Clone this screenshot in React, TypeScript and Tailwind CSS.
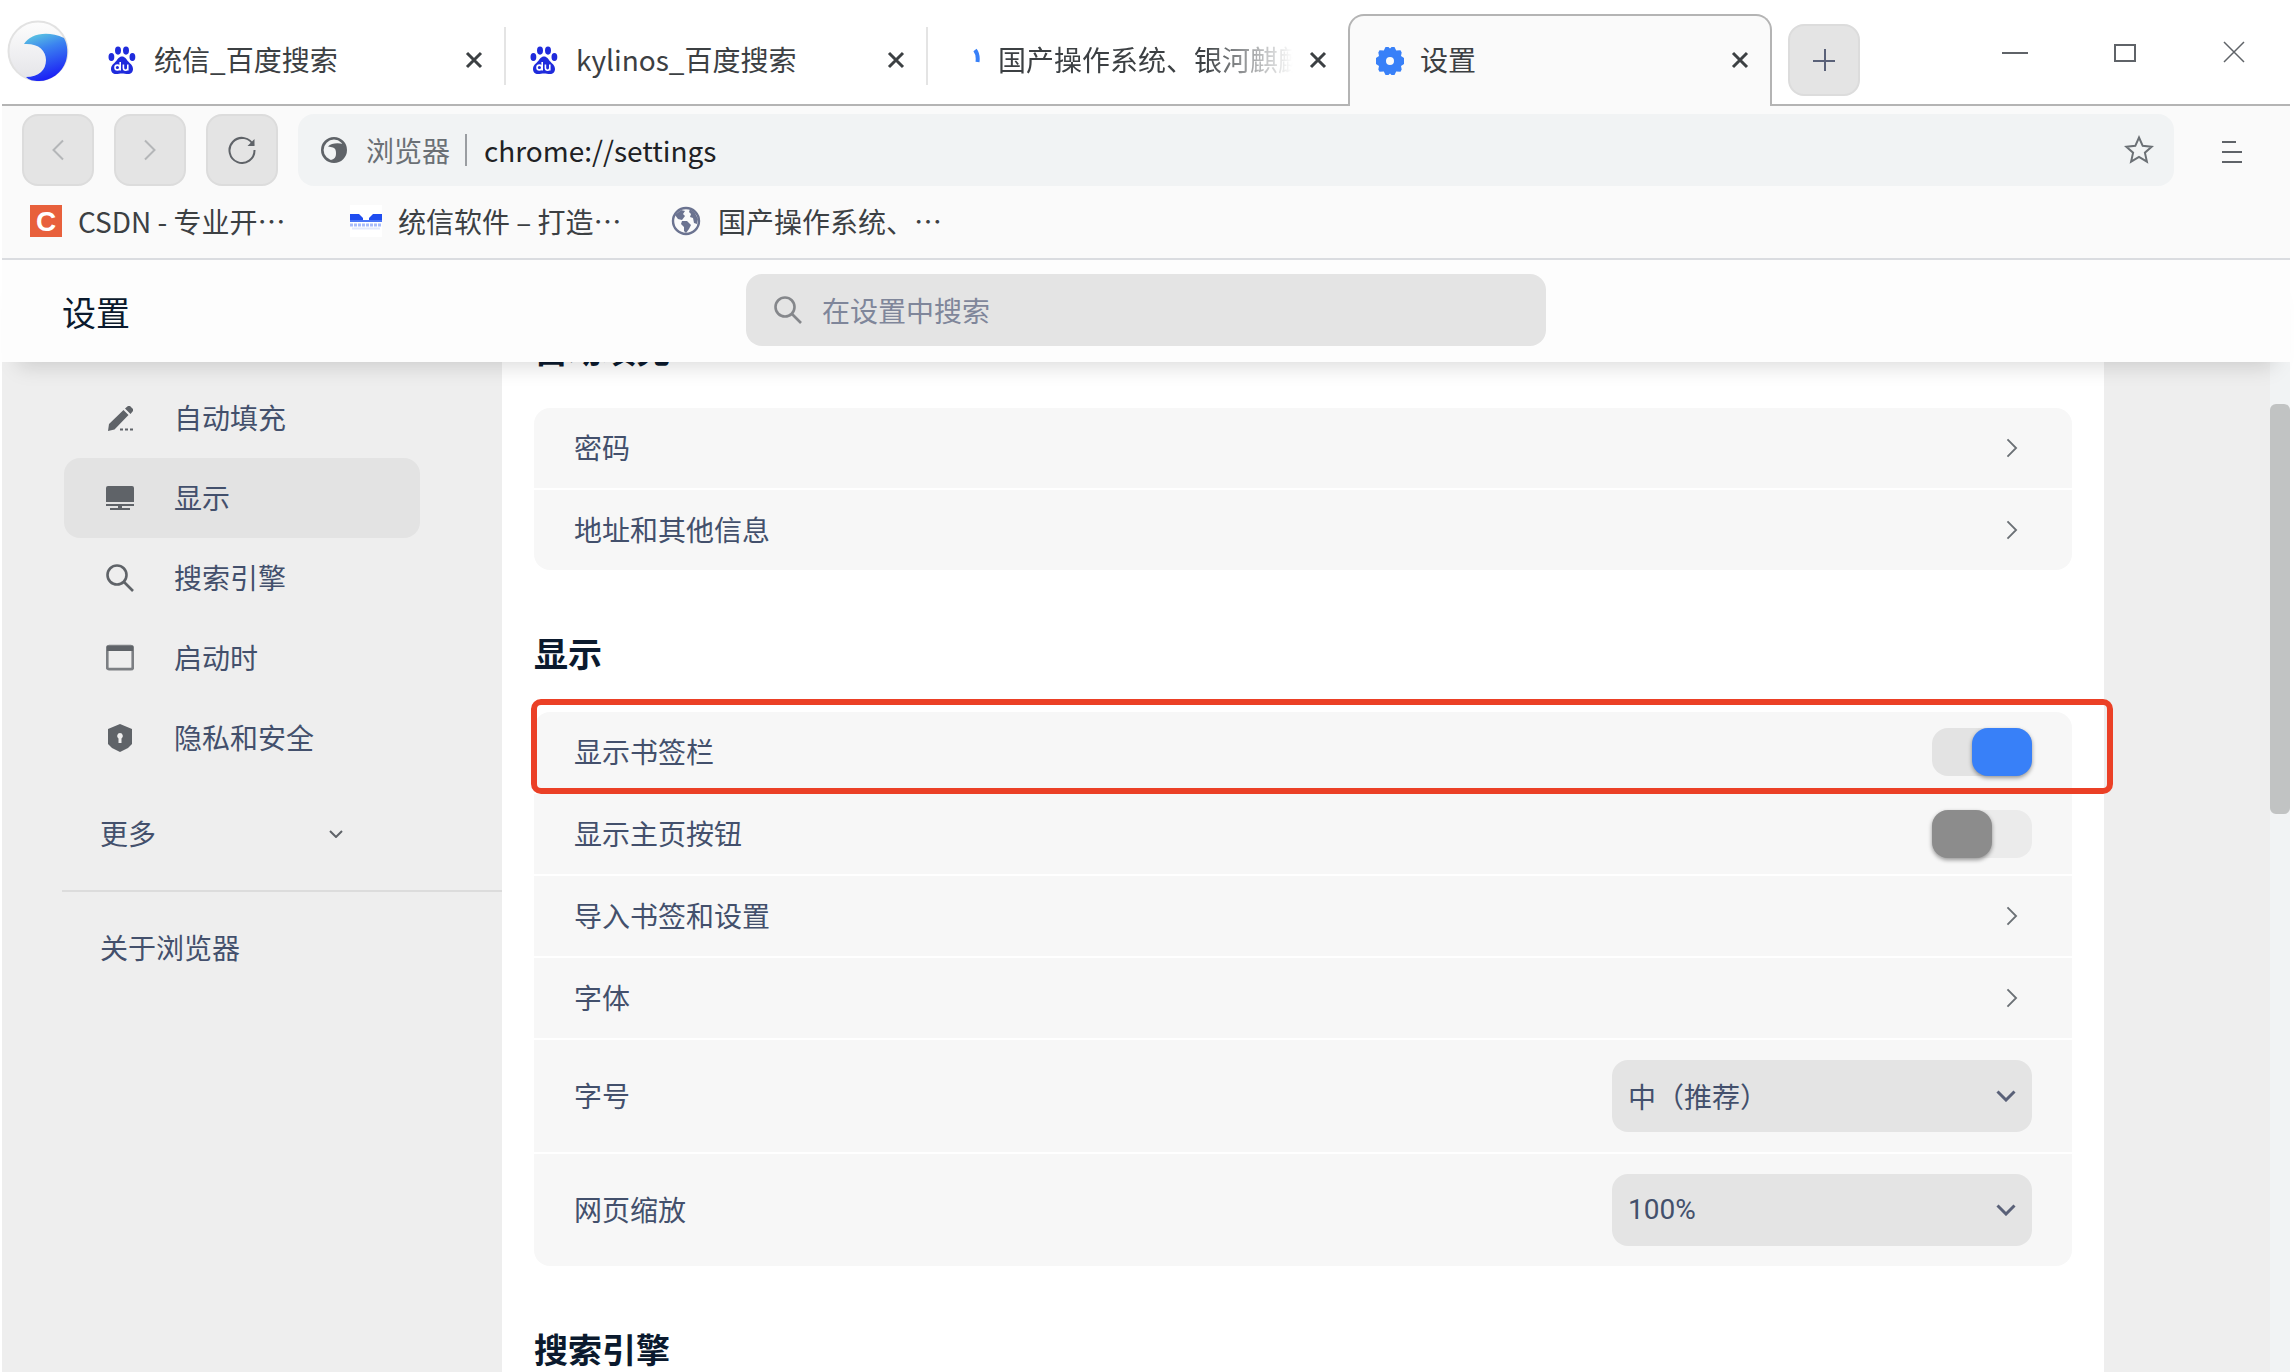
import React, { useState } from 'react';

interface Tab {
  title: string;
  icon: 'baidu' | 'loading' | 'gear';
}

const TABS: Tab[] = [
  { title: '统信_百度搜索', icon: 'baidu' },
  { title: 'kylinos_百度搜索', icon: 'baidu' },
  { title: '国产操作系统、银河麒麟', icon: 'loading' },
];

function BaiduIcon() {
  return (
    <svg viewBox="0 0 28 28" className="size-7 shrink-0" aria-hidden="true">
      <g fill="#1f2bdc">
        <ellipse cx="10" cy="4.6" rx="3" ry="4.1" />
        <ellipse cx="18" cy="4.6" rx="3" ry="4.1" />
        <ellipse cx="3.4" cy="11" rx="2.9" ry="3.9" />
        <ellipse cx="24.4" cy="11" rx="2.9" ry="3.9" />
        <path d="M14 10.5c3 0 4.2 2.6 6 4.8 2 2.4 5 4 5 7.7 0 3-2 5-5 5-2.2 0-4-.5-6-.5s-3.8.5-6 .5c-3 0-5-2-5-5 0-3.7 3-5.3 5-7.7 1.8-2.2 3-4.8 6-4.8z" />
      </g>
      <g fill="none" stroke="#fff" strokeWidth="1.6">
        <circle cx="9.4" cy="21.5" r="2.4" />
        <path d="M12.2 16v8.500M15.400 18.500v3.500a2.200 2.200 0 0 0 4.400 0v-3.500 6" />
      </g>
    </svg>
  );
}

function GearIcon() {
  return (
    <svg viewBox="0 0 28 28" className="size-7 shrink-0" aria-hidden="true">
      <path
        fill="#3880f8"
        fillRule="evenodd"
        d="M9.5 0h3L14 1.5 15.5 0h3l1.700 3.500 4.300-.2 1.200 2.200-.7 3.500L28 11v6l-3 2 .7 3.500-1.200 2.200-4.300-.2-1.700 3.500h-3L14 26.500 12.500 28h-3l-1.700-3.500-4.300.2-1.200-2.200L3 19l-3-2v-6l3-2-.7-3.500 1.200-2.200 4.300.2zM14 10a4 4 0 1 0 0 8 4 4 0 0 0 0-8z"
      />
    </svg>
  );
}

function TabIcon({ icon }: { icon: Tab['icon'] }) {
  if (icon === 'baidu') return <BaiduIcon />;
  if (icon === 'gear') return <GearIcon />;
  return (
    <svg viewBox="0 0 28 28" className="size-7 shrink-0" aria-hidden="true">
      <path d="M23 4q3.5 4.5 2.500 12" fill="none" stroke="#3880f8" strokeWidth="4" />
    </svg>
  );
}

function CloseIcon() {
  return (
    <svg viewBox="0 0 18 18" className="size-[18px]" aria-hidden="true">
      <path d="M2 2l14 14M16 2L2 16" stroke="#3c4043" strokeWidth="3" />
    </svg>
  );
}

function ChevronRight({ className }: { className: string }) {
  return (
    <svg viewBox="0 0 12 22" className={className} fill="none" stroke="currentColor" strokeWidth="2">
      <path d="M1 1.5l9.5 9.5L1 20.5" />
    </svg>
  );
}

function BrowserLogo() {
  return (
    <svg viewBox="0 0 62 64" className="h-16 w-[62px] shrink-0" aria-hidden="true">
      <defs>
        <linearGradient id="wave" x1="0.2" y1="0" x2="0.5" y2="1">
          <stop offset="0" stopColor="#5cc8e0" />
          <stop offset="0.35" stopColor="#3b82f0" />
          <stop offset="1" stopColor="#1a1cf5" />
        </linearGradient>
        <linearGradient id="shell" x1="0" y1="0" x2="0" y2="1">
          <stop offset="0" stopColor="#fdfdfd" />
          <stop offset="1" stopColor="#e4e4e8" />
        </linearGradient>
      </defs>
      <circle cx="31" cy="32" r="29.5" fill="url(#shell)" stroke="#e2e2e2" strokeWidth="2" />
      <path
        fill="url(#wave)"
        d="M17 25C23 15 40 11 57 19c4 7 4 16 2 23-4 12-15 20-27 20-6 0-10-1-13-4 13 0 20-7 20-17s-8-17-22-16z"
      />
    </svg>
  );
}

function TabStrip() {
  return (
    <div className="flex h-[106px] shrink-0">
      <div className="flex w-[82px] shrink-0 items-center border-b-2 border-[#b4b4b4] pb-0.5 pl-[5px]">
        <BrowserLogo />
      </div>
      {TABS.map((tab) => (
        <div
          key={tab.title}
          className={`flex shrink-0 items-center border-b-2 border-[#b4b4b4] pt-4 ${
            tab.icon === 'loading' ? 'w-[420px]' : 'w-[422px]'
          }`}
        >
          <div className="flex min-w-0 flex-1 items-center gap-[18px] pl-6">
            <TabIcon icon={tab.icon} />
            <span
              className={`min-w-0 flex-1 overflow-hidden whitespace-nowrap pb-0.5 ${
                tab.icon === 'loading'
                  ? '[mask-image:linear-gradient(to_right,black_70%,transparent)]'
                  : ''
              }`}
            >
              {tab.title}
            </span>
          </div>
          <button aria-label="关闭标签页" className="ml-4 mr-[21px]">
            <CloseIcon />
          </button>
          {tab.icon !== 'loading' && <div className="-mt-2 h-[58px] w-0.5 bg-[#e4e4e4]" />}
        </div>
      ))}
      <div className="mt-3.5 flex w-[424px] shrink-0 items-center rounded-t-2xl border-2 border-b-0 border-[#b4b4b4] bg-[#fafafa] pl-[26px] pr-[21px]">
        <TabIcon icon="gear" />
        <span className="flex-1 pb-1 pl-4">设置</span>
        <button aria-label="关闭标签页" className="pb-0.5">
          <CloseIcon />
        </button>
      </div>
      <div className="flex flex-1 border-b-2 border-[#b4b4b4] pl-4 pt-6">
        <button
          aria-label="新建标签页"
          className="flex size-[72px] items-center justify-center rounded-2xl border-2 border-[#dcdcdc] bg-[#e4e4e4]"
        >
          <svg viewBox="0 0 22 22" className="size-[22px]" aria-hidden="true">
            <path d="M12 0v22M0 12h22" stroke="#5a6178" strokeWidth="2" />
          </svg>
        </button>
        <div className="ml-auto flex h-14 items-center gap-[85px] pr-11 text-[#5f6368]">
          <button aria-label="最小化">
            <svg viewBox="0 0 26 24" className="h-6 w-[26px]" aria-hidden="true">
              <path d="M0 13h26" stroke="currentColor" strokeWidth="2" />
            </svg>
          </button>
          <button aria-label="最大化">
            <svg viewBox="0 0 24 24" className="size-6" aria-hidden="true">
              <rect x="2" y="5" width="20" height="16" fill="none" stroke="currentColor" strokeWidth="2" />
            </svg>
          </button>
          <button aria-label="关闭">
            <svg viewBox="0 0 24 24" className="size-6" aria-hidden="true">
              <path d="M2 2l20 20M22 2L2 22" stroke="currentColor" strokeWidth="1.5" />
            </svg>
          </button>
        </div>
      </div>
    </div>
  );
}

const TOOL_BUTTON =
  'flex size-[72px] shrink-0 items-center justify-center rounded-2xl border-2 border-[#dcdcdc] bg-[#e4e4e4]';

function Toolbar() {
  return (
    <div className="flex shrink-0 items-center gap-5 bg-[#fafafa] pl-5 pt-2">
      <button aria-label="后退" className={TOOL_BUTTON}>
        <ChevronRight className="h-[22px] w-3 rotate-180 text-[#b4b6b8]" />
      </button>
      <button aria-label="前进" className={TOOL_BUTTON}>
        <ChevronRight className="h-[22px] w-3 text-[#b4b6b8]" />
      </button>
      <button aria-label="刷新" className={TOOL_BUTTON}>
        <svg viewBox="0 0 28 28" className="size-7" fill="none" aria-hidden="true">
          <path d="M25.5 9.5A12.5 12.5 0 1 0 26.5 14" stroke="#5f6368" strokeWidth="2" />
          <path d="M26.5 3v7h-7z" fill="#5f6368" />
        </svg>
      </button>
      <div className="flex h-[72px] min-w-0 flex-1 items-center rounded-2xl bg-[#f1f3f4] pl-[23px] pr-5">
        <svg viewBox="0 0 26 26" className="size-[26px] shrink-0" aria-hidden="true">
          <circle cx="13" cy="13" r="11.7" fill="none" stroke="#5f6368" strokeWidth="2.6" />
          <path
            fill="#5f6368"
            d="M7 9.5C10 6.5 16 5.5 22 7c4 6 2 13-4 16-3 1.5-7 1.5-9 0 5-.5 6-3 6-7 0-3-1-5-3-5.5-1.500-.5-3-.5-5-1z"
          />
        </svg>
        <span className="pl-[19px] text-[#6b7075]">浏览器</span>
        <span className="ml-[15px] mr-[17px] h-8 w-0.5 bg-[#9a9da1]" />
        <input
          aria-label="地址栏"
          defaultValue="chrome://settings"
          className="min-w-0 flex-1 bg-transparent text-[#202124] outline-none"
        />
        <button aria-label="收藏此页">
          <svg viewBox="0 0 30 30" className="size-[30px]" fill="none" stroke="#6b7075" strokeWidth="2">
            <path d="M15 2.5l3.700 8.300 9 .9-6.800 6 2 8.900-7.900-4.700-7.900 4.700 2-8.900-6.800-6 9-.9z" />
          </svg>
        </button>
      </div>
      <button aria-label="菜单" className="ml-7 mr-12 mt-1">
        <svg viewBox="0 0 20 22" className="h-[22px] w-5" stroke="#5f6368" strokeWidth="2">
          <path d="M0 1h14M0 11h20M0 21h20" />
        </svg>
      </button>
    </div>
  );
}

function BookmarkBar() {
  return (
    <nav
      aria-label="书签栏"
      className="flex h-[74px] shrink-0 items-center border-b-2 border-[#dadce0] bg-[#fafafa] pl-7 pb-0.5 text-[#3c4043]"
    >
      <a href="#csdn" className="flex w-80 items-center gap-4">
        <span className="flex size-8 items-center justify-center bg-[#e8603c] pt-0.5 font-['Liberation_Sans',sans-serif] text-[28px] font-bold leading-8 text-white">
          C
        </span>
        CSDN - 专业开⋯
      </a>
      <a href="#uniontech" className="flex w-80 items-center gap-4">
        <svg viewBox="0 0 32 32" className="size-8 bg-white" aria-hidden="true">
          <path d="M0 9h9l4 4v3H0zM32 9h-9l-4 4v3h13z" fill="#1f4df0" />
          <path d="M0 15h32v2H0z" fill="#4a74f5" />
          <path d="M0 20h32" stroke="#a9bcfa" strokeWidth="3" strokeDasharray="3 1" />
          <path d="M2 23.5h28" stroke="#e3e9fd" strokeWidth="2" />
        </svg>
        统信软件 – 打造⋯
      </a>
      <a href="#kylin" className="flex items-center gap-4">
        <svg viewBox="0 0 32 32" className="size-8" aria-hidden="true">
          <circle cx="16" cy="16" r="13" fill="none" stroke="#6b7390" strokeWidth="2.4" />
          <path
            fill="#6b7390"
            d="M5 10l6-5 4 1-2 3 2 2-3 4-4-1zM12 16h5l4 4-2 4-3 4-2-2v-4l-3-3zM20 4l5 4 3 6-1 5-3-1-1-5-3-1 1-3-2-2z"
          />
        </svg>
        国产操作系统、⋯
      </a>
    </nav>
  );
}

const NAV_ITEMS = ['自动填充', '显示', '搜索引擎', '启动时', '隐私和安全'];

function SearchIcon() {
  return (
    <svg viewBox="0 0 28 28" className="size-7" fill="none" stroke="currentColor" strokeWidth="2.6">
      <circle cx="11" cy="11" r="9.5" />
      <path d="M18 18l9 9" />
    </svg>
  );
}

const NAV_ICONS: React.ReactNode[] = [
  <svg viewBox="0 0 28 28" className="size-7" fill="currentColor">
    <path d="M2 27l1-7L17.500 6l5 5L8.500 25.500zM19 4.500L22 2h2l3 3v2l-2.500 3z" />
    <path d="M14 24.500h3v2h-3zM19 24.500h3v2h-3zM24 24.500h3v2h-3z" />
  </svg>,
  <svg viewBox="0 0 28 28" className="size-7" fill="currentColor">
    <path d="M2 2h24a2 2 0 0 1 2 2v14H0V4a2 2 0 0 1 2-2zM0 20h28v2H16v2h8v2H4v-2h8v-2H0z" />
  </svg>,
  <SearchIcon />,
  <svg viewBox="0 0 28 28" className="size-7">
    <rect x="1.2" y="2.2" width="25.6" height="23" rx="2" fill="none" stroke="currentColor" strokeOpacity="0.8" strokeWidth="2.8" />
    <path d="M1 2h26v5H1z" fill="currentColor" />
  </svg>,
  <svg viewBox="0 0 28 28" className="size-7" fill="currentColor" fillRule="evenodd">
    <path d="M14 0l12 5v15l-4 4-8 4-8-4-4-4V5zM14 9a3 3 0 0 0-1.500 5.500V19h3v-4.500A3 3 0 0 0 14 9z" />
  </svg>,
];

function Sidebar() {
  return (
    <aside className="w-[500px] shrink-0 text-[#43506c]">
      <nav aria-label="设置" className="flex flex-col pl-[60px] pt-4">
        {NAV_ITEMS.map((item, i) => (
          <a
            key={item}
            href="#settings"
            className={`ml-0.5 flex h-20 w-[356px] items-center gap-10 rounded-2xl pl-[42px] ${
              item === '显示' ? 'bg-[#e3e3e3]' : ''
            }`}
          >
            <span className="text-[#5f6368]">{NAV_ICONS[i]}</span>
            <span className="pb-0.5">{item}</span>
          </a>
        ))}
        <button className="my-4 ml-0.5 flex h-20 w-[356px] items-center justify-between pl-9 pr-[77px]">
          <span className="pb-0.5">更多</span>
          <svg viewBox="0 0 14 8" className="h-2 w-3.5" fill="none" stroke="#5f6368" strokeWidth="2">
            <path d="M1 1l6 6 6-6" />
          </svg>
        </button>
        <div className="h-0.5 bg-[#dcdcdc]" />
        <a href="#about" className="ml-0.5 mt-4 flex h-20 items-center pb-0.5 pl-9">
          关于浏览器
        </a>
      </nav>
    </aside>
  );
}

function LinkRow({ label }: { label: string }) {
  return (
    <button className="flex h-20 items-center justify-between bg-[#f7f7f7] pl-10 pr-[54px]">
      <span className="pb-0.5">{label}</span>
      <ChevronRight className="h-5 w-3 text-[#6b7075]" />
    </button>
  );
}

function ToggleRow({ label, initial }: { label: string; initial: boolean }) {
  const [on, setOn] = useState(initial);
  return (
    <label className="relative flex h-20 items-center justify-between bg-[#f7f7f7] px-10">
      <span className="pb-0.5">{label}</span>
      <input
        type="checkbox"
        role="switch"
        checked={on}
        onChange={(e) => setOn(e.target.checked)}
        className="sr-only"
      />
      <span className={`flex h-12 w-[100px] rounded-2xl ${on ? 'justify-end bg-[#e3e3e3]' : 'bg-[#ebebeb]'}`}>
        <span
          className={`h-12 w-[60px] rounded-2xl shadow-[0_2px_4px_rgba(0,0,0,0.4)] ${
            on ? 'bg-[#3880f8]' : 'bg-[#8c8c8c]'
          }`}
        />
      </span>
    </label>
  );
}

interface SelectRowProps {
  id: string;
  label: string;
  options: string[];
  selectClass?: string;
}

function SelectRow({ id, label, options, selectClass = '' }: SelectRowProps) {
  return (
    <div className="flex h-28 items-center justify-between bg-[#f7f7f7] px-10">
      <label htmlFor={id} className="pb-0.5">
        {label}
      </label>
      <div className="relative w-[420px]">
        <select
          id={id}
          className={`block h-[72px] w-full appearance-none rounded-2xl bg-[#e4e4e4] pl-4 pr-14 outline-none ${selectClass}`}
        >
          {options.map((o) => (
            <option key={o}>{o}</option>
          ))}
        </select>
        <svg
          viewBox="0 0 20 12"
          className="pointer-events-none absolute right-4 top-[30px] h-3 w-5"
          fill="none"
          stroke="#5a6178"
          strokeWidth="3"
        >
          <path d="M1.5 1.5L10 10l8.500-8.500" />
        </svg>
      </div>
    </div>
  );
}

function Section({ title, children }: { title: string; children?: React.ReactNode }) {
  return (
    <section>
      <h2 className="mb-[34px] text-[34px] font-bold leading-[50px] text-[#0b1a2e]">{title}</h2>
      <div className="flex flex-col gap-0.5 overflow-hidden rounded-2xl">{children}</div>
    </section>
  );
}

export default function App() {
  return (
    <div className="flex h-screen flex-col overflow-hidden bg-white pl-0.5 pr-1.5 font-['Noto_Sans_CJK_SC',sans-serif] text-[28px] leading-10 text-[#3c4043]">
      <TabStrip />
      <Toolbar />
      <BookmarkBar />
      <header className="relative z-10 flex h-[102px] shrink-0 items-center bg-[#fdfdfd] px-[60px] shadow-[0_20px_20px_-16px_rgba(0,0,0,0.15)]">
        <h1 className="flex-1 pt-0.5 text-[34px] text-[#0b1a2e]">设置</h1>
        <label className="mb-0.5 flex h-[72px] w-[800px] items-center gap-5 rounded-2xl bg-[#e4e4e4] pl-7 text-[#85878b]">
          <SearchIcon />
          <input
            type="search"
            aria-label="在设置中搜索"
            placeholder="在设置中搜索"
            className="min-w-0 flex-1 bg-transparent outline-none placeholder:text-[#7f869a]"
          />
        </label>
        <div className="flex-1" />
      </header>

      <div className="flex min-h-0 flex-1 overflow-hidden bg-[#eeeeee]">
        <Sidebar />
        <main className="min-w-0 flex-1 bg-white px-8 text-[#43506c]">
          <div className="-mt-[38px] flex flex-col gap-[58px]">
            <Section title="自动填充">
              <LinkRow label="密码" />
              <LinkRow label="地址和其他信息" />
            </Section>
            <div className="relative">
              <Section title="显示">
                <ToggleRow label="显示书签栏" initial />
                <ToggleRow label="显示主页按钮" initial={false} />
                <LinkRow label="导入书签和设置" />
                <LinkRow label="字体" />
                <SelectRow id="font-size" label="字号" options={['中（推荐）', '小', '大']} />
                <SelectRow
                  id="zoom"
                  label="网页缩放"
                  options={['100%', '125%', '150%']}
                  selectClass="font-[Roboto,sans-serif]"
                />
              </Section>
              {/* Callout around the bookmark bar switch; runs past the panel's right edge. */}
              <div className="pointer-events-none absolute -left-[3px] -right-[41px] top-[71px] h-[95px] rounded-[10px] border-[6px] border-[#eb4026]" />
            </div>
            <Section title="搜索引擎" />
          </div>
        </main>
        <div className="w-[166px] shrink-0" />
        <div className="w-5 shrink-0 bg-[#f1f3f4] pt-[42px]">
          <div className="h-[410px] rounded-md bg-[#c1c3c3]" />
        </div>
      </div>
    </div>
  );
}
